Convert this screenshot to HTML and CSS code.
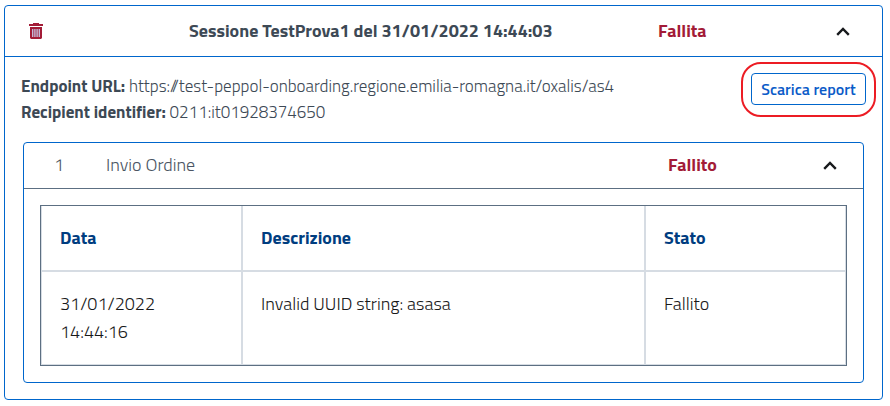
FILE: index.html
```
<!DOCTYPE html>
<html lang="it">
<head>
<meta charset="utf-8">
<title>Sessione TestProva1</title>
<link rel="stylesheet" href="styles.css">
</head>
<body>
<main class="session">
  <header class="session-head">
    <svg class="trash" viewBox="0 0 14 16"><path fill="#a31c37" d="M0 1h4V0h6v1h4v2H0zM1 4h12v11l-1 1H2l-1-1z"/><path fill="#c4bad8" d="M3 6h1.4v8H3zM5.2 6h1.4v8H5.2zM7.4 6h1.4v8H7.4zM9.6 6H11v8H9.6z"/></svg>
    <span class="session-title">Sessione TestProva1 del 31/01/2022 14:44:03</span>
    <span class="status session-status">Fallita</span>
    <svg class="chevron" viewBox="0 0 14 9"><path d="M1.2 7.8 7 2l5.8 5.8"/></svg>
  </header>
  <section class="session-info">
    <div class="details">
      <p><b>Endpoint URL:</b> https://test-peppol-onboarding.regione.emilia-romagna.it/oxalis/as4</p>
      <p><b>Recipient identifier:</b> 0211:it01928374650</p>
    </div>
    <div class="highlight"><button class="report">Scarica report</button></div>
  </section>
  <section class="step">
    <header class="step-head">
      <span class="step-number">1</span>
      <span class="step-name">Invio Ordine</span>
      <span class="status step-status">Fallito</span>
      <svg class="chevron" viewBox="0 0 14 9"><path d="M1.2 7.8 7 2l5.8 5.8"/></svg>
    </header>
    <div class="grid">
      <div class="cell th">Data</div>
      <div class="cell th">Descrizione</div>
      <div class="cell th">Stato</div>
      <div class="cell">31/01/2022<br>14:44:16</div>
      <div class="cell">Invalid UUID string: asasa</div>
      <div class="cell">Fallito</div>
    </div>
  </section>
</main>
</body>
</html>
```
FILE: styles.css
```
* { box-sizing: border-box; }
body {
  margin: 0;
  padding: 5px 0 0 4px;
  background: #fff;
  color: #3d4955;
  font-family: "Titillium Web", Roboto, sans-serif;
  font-size: 18px;
  font-weight: 300;
  white-space: nowrap;
}
p { margin: 0; }
b { font-weight: 700; }
.session {
  width: 879px;
  height: 395px;
  border: 1px solid #06c;
  border-radius: 4px;
}
.session-head {
  display: flex;
  align-items: center;
  height: 51px;
  padding-left: 24px;
  border-bottom: 1px solid #06c;
}
.session-head span, .step-head span { padding-bottom: 2px; }
.trash { width: 14px; height: 16px; }
.session-title { width: 469px; margin-left: 146px; font-weight: 700; }
.status { color: #a31c37; font-weight: 700; }
.session-status { width: 178px; }
.chevron { width: 14px; height: 9px; }
.chevron path { fill: none; stroke: #17191c; stroke-width: 2.4; }
.session-info { display: flex; height: 85px; }
.details {
  width: 736px;
  padding: 16px 0 0 16px;
  font-size: 17px;
  line-height: 26px;
}
.highlight {
  width: 135px;
  height: 55px;
  margin-top: 5px;
  padding: 9px 8px;
  border: 2px solid #ec1c24;
  border-radius: 20px;
}
.report {
  width: 115px;
  height: 32px;
  padding: 0;
  border: 1px solid #06c;
  border-radius: 4px;
  background: #fff;
  color: #0a5bc8;
  font: 600 16px "Titillium Web", Roboto, sans-serif;
}
.step {
  width: 841px;
  height: 241px;
  margin-left: 18px;
  border: 1px solid #06c;
  border-radius: 4px;
}
.step-head {
  display: flex;
  align-items: center;
  height: 46px;
  padding-left: 30px;
  border-bottom: 1px solid #5c6f82;
}
.step-number { width: 52px; color: #4b5563; }
.step-name { width: 562px; color: #4b5563; }
.step-status { width: 155px; }
.grid {
  display: grid;
  grid-template-columns: 202px 403px 200px;
  grid-template-rows: 66px 93px;
  width: 807px;
  height: 161px;
  margin: 16px 0 0 16px;
  border: 1px solid #5c6f82;
  color: #19191a;
}
.cell {
  padding: 18px;
  border: solid #d6dce3;
  border-width: 0 2px 0 0;
  line-height: 28px;
}
.cell:nth-child(3n) { border-right-width: 1px; }
.cell:nth-child(3n + 1) { border-left-width: 1px; }
.cell:nth-child(n + 4) { border-bottom-width: 1px; }
.th { border-bottom-width: 2px; color: #003d80; font-weight: 700; }
```
